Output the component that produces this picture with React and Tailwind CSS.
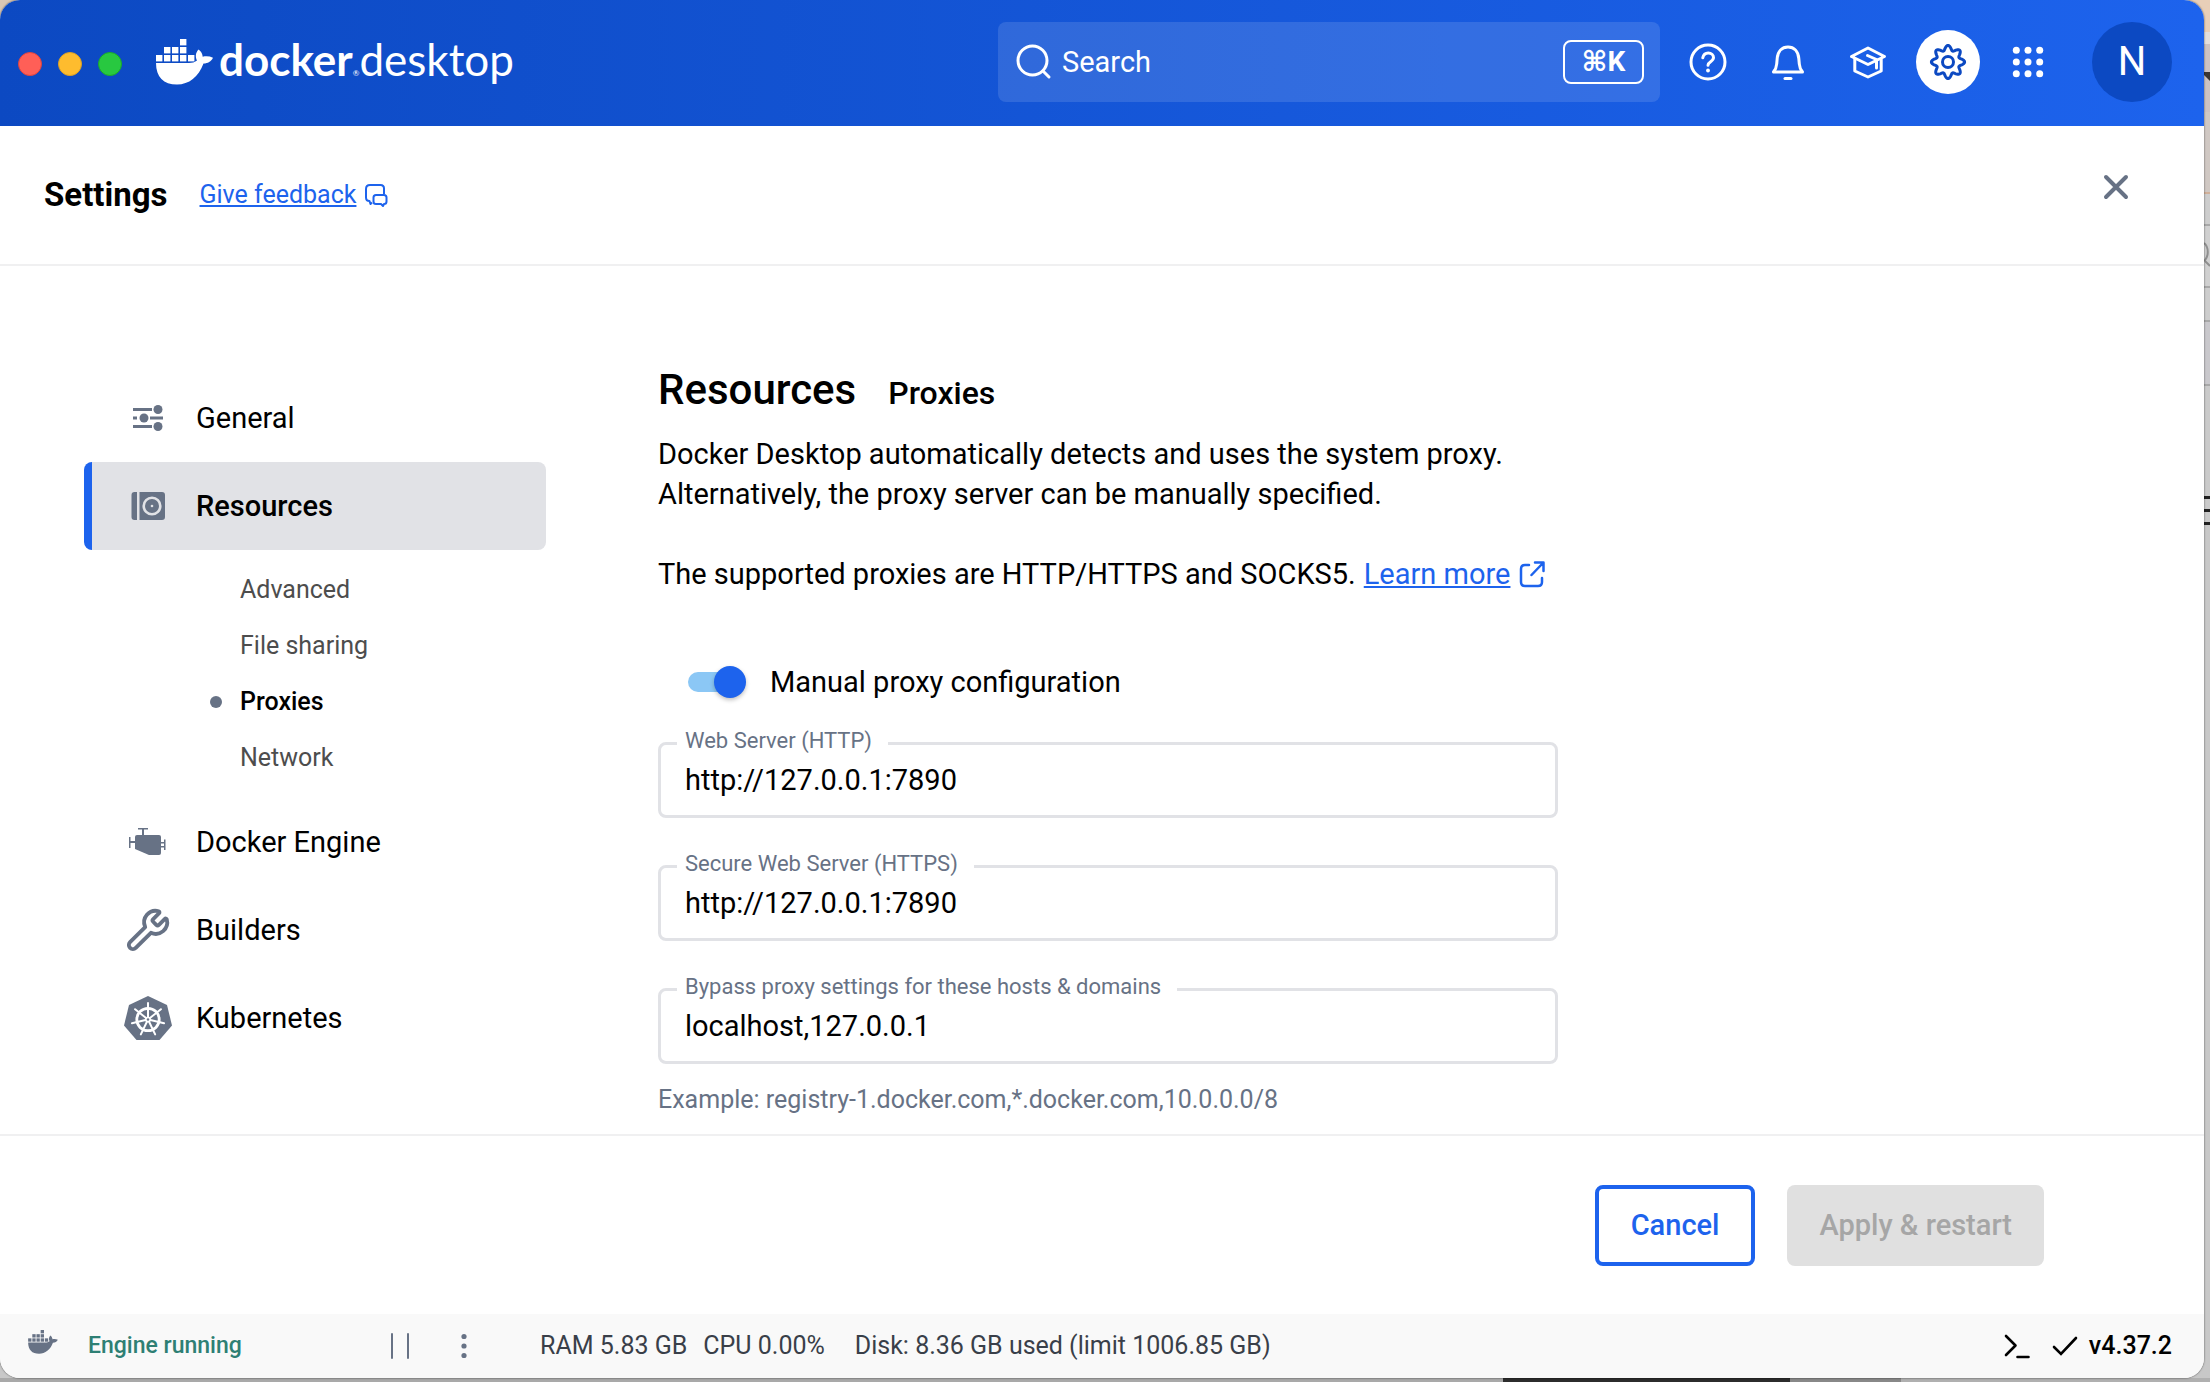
import { useState } from "react";
import { Wrench } from "lucide-react";

function Whale({ className }) {
  const blocks = [
    [24, 0],
    [8, 8], [16, 8], [24, 8],
    [0, 16], [8, 16], [16, 16], [24, 16], [32, 16],
  ];
  return (
    <svg viewBox="0 0 57 46" className={className} fill="currentColor" aria-hidden="true">
      {blocks.map(([x, y]) => (
        <rect key={`${x}-${y}`} x={x} y={y} width="6.4" height="6.4" />
      ))}
      <path d="M0 24h33c3 0 6-.8 8-2.500-1.800-3.500-1.600-7.500 1.500-11 2.700 2 4 4.300 4.200 7.300 3.500-.8 7-.5 10.300 1-2 4-5 5.500-9.500 5.800C42.500 38 33 45.600 21 45.600 7.500 45.600 0 38 0 24Z" />
    </svg>
  );
}

function HelpIcon() {
  return (
    <svg viewBox="0 0 40 40" className="size-10" fill="none" stroke="currentColor" strokeWidth="3" strokeLinecap="round" aria-hidden="true">
      <circle cx="20" cy="20" r="17" />
      <path d="M14.800 15.800c.6-3.200 2.700-4.800 5.500-4.800 3 0 5.200 1.900 5.200 4.600 0 4.200-5.500 3.900-5.500 7.600" />
      <circle cx="20" cy="28.500" r="1.900" fill="currentColor" stroke="none" />
    </svg>
  );
}

function BellIcon() {
  return (
    <svg viewBox="0 0 40 40" className="size-10" fill="none" stroke="currentColor" strokeWidth="3" strokeLinecap="round" strokeLinejoin="round" aria-hidden="true">
      <path d="M5.500 30h29c-2-2.600-3-5-3.200-8l-.5-5.500C30.200 9.200 26 5 20 5S9.800 9.200 9.200 16.500L8.700 22c-.2 3-1.200 5.400-3.200 8Z" />
      <path d="M17 36.500h6" />
    </svg>
  );
}

function LearnIcon() {
  return (
    <svg viewBox="0 0 40 40" className="size-10" fill="none" stroke="currentColor" strokeWidth="3" strokeLinejoin="round" aria-hidden="true">
      <path d="M20 6 3.500 14.500 20 22.500l16.500-8L20 6Z" />
      <path d="M6.800 16.500V29L20 35l13.200-6V16.500" />
      <path d="M19.500 13.500 28.500 17.500V26" strokeLinecap="round" />
    </svg>
  );
}

const gearPath =
  Array.from({ length: 161 }, (_, i) => {
    const a = (i / 160) * Math.PI * 2;
    const r = 14.2 + 2.400 * Math.cos(8 * a);
    return `${i ? "L" : "M"}${(20 + r * Math.cos(a)).toFixed(2)} ${(20 + r * Math.sin(a)).toFixed(2)}`;
  }).join("") + "Z";

function GearIcon() {
  return (
    <svg viewBox="0 0 40 40" className="size-10" fill="none" stroke="currentColor" strokeWidth="3" strokeLinejoin="round" aria-hidden="true">
      <path d={gearPath} />
      <circle cx="20" cy="20" r="5.500" />
    </svg>
  );
}

function AppsIcon() {
  return (
    <svg viewBox="0 0 40 40" className="size-10" fill="currentColor" aria-hidden="true">
      {[8.3, 20, 31.7].map((y) => [8.3, 20, 31.7].map((x) => <circle key={`${x}-${y}`} cx={x} cy={y} r="3.500" />))}
    </svg>
  );
}

function SlidersIcon() {
  return (
    <svg viewBox="0 0 48 48" className="size-12" fill="currentColor" aria-hidden="true">
      <path d="M9 14h19v3H9zM9 22.500h4v3H9zM26 22.500h13v3H26zM9 31h19v3H9z" />
      <circle cx="34" cy="15.500" r="4.500" />
      <circle cx="20" cy="24" r="4.500" />
      <circle cx="34" cy="32.500" r="4.500" />
    </svg>
  );
}

function DiskIcon() {
  return (
    <svg viewBox="0 0 48 48" className="size-12" aria-hidden="true">
      <path fill="currentColor" d="M10.500 10H13v28h-2.500a3 3 0 0 1-3-3V13a3 3 0 0 1 3-3ZM15.500 10H38a3 3 0 0 1 3 3v22a3 3 0 0 1-3 3H15.500z" />
      <circle cx="28" cy="24" r="8.300" fill="none" stroke="#e1e2e6" strokeWidth="2.600" />
      <circle cx="28" cy="24" r="1.300" fill="#e1e2e6" />
    </svg>
  );
}

function EngineIcon() {
  return (
    <svg viewBox="0 0 48 48" className="size-12" fill="currentColor" aria-hidden="true">
      <path d="M13 17h22q2 0 2 2v16q0 2-2 2H25L11 31V19q0-2 2-2Z" />
      <path d="M14 10h10v1.500h-4V17h-2v-5.500h-4zM5 19h1.500v4H11v2H6.500v5H5zM37 24h3v-2.500h1.500V32H40v-2.500h-3V28h3v-2.500h-3z" />
    </svg>
  );
}

function KubernetesIcon() {
  const spokes = [0, 1, 2, 3, 4, 5, 6];
  return (
    <svg viewBox="0 0 48 48" className="size-12" aria-hidden="true">
      <path fill="currentColor" d="M24 2 43 11l5 20.500L35.500 46h-23L0 31.500 5 11Z" />
      <circle cx="24" cy="25.500" r="11.200" fill="none" stroke="#fff" strokeWidth="2.800" />
      {spokes.map((i) => (
        <path key={i} d="M24 23V9" stroke="#fff" strokeWidth="2" strokeLinecap="round" transform={`rotate(${(i * 360) / 7} 24 25.500)`} />
      ))}
      <circle cx="24" cy="25.500" r="3" fill="#fff" />
      <circle cx="24" cy="25.500" r="1.200" fill="currentColor" />
    </svg>
  );
}

const subItems = ["Advanced", "File sharing", "Proxies", "Network"];

function NavItem({ icon, label, active }) {
  return (
    <a
      href="#"
      aria-current={active ? "page" : undefined}
      className={
        active
          ? "flex h-22 items-center gap-6 rounded-lg border-l-8 border-[#1d63ed] bg-[#e1e2e6] pl-8 font-medium"
          : "flex h-22 items-center gap-6 rounded-lg border-l-8 border-transparent pl-8"
      }
    >
      <span className="flex w-12 justify-center text-[#677285]">{icon}</span>
      {label}
    </a>
  );
}

function Field({ id, label, initial }) {
  const [value, setValue] = useState(initial);
  return (
    <div className="relative flex h-19 rounded-lg border-3 border-[#e1e2e6] px-6">
      <label htmlFor={id} className="absolute -top-4 left-4 bg-white pr-4 pl-2 text-[22px] leading-6 text-[#677285]">
        {label}
      </label>
      <input id={id} type="text" value={value} onChange={(e) => setValue(e.target.value)} className="w-full bg-transparent outline-none" />
    </div>
  );
}

function HeaderButton({ label, children, active }) {
  return (
    <button
      type="button"
      aria-label={label}
      className={
        active
          ? "flex size-16 items-center justify-center rounded-full bg-white text-[#0c49c2]"
          : "flex size-16 items-center justify-center rounded-full text-white"
      }
    >
      {children}
    </button>
  );
}

function Backdrop() {
  return (
    <div aria-hidden="true" className="absolute inset-0 overflow-hidden bg-[#c8c8c8]">
      <div className="absolute top-0 left-0 size-6 bg-[#d9c6b4]" />
      <div className="absolute inset-y-0 right-0 flex w-5 flex-col">
        <div className="h-8 bg-[#e8cfb8]" />
        <div className="h-3 bg-[#e4dedb]" />
        <div className="h-17 bg-[#cdc2c2]" />
        <div className="h-20 bg-[#d0c8c3]" />
        <div className="h-[2px] bg-[#d0b09a]" />
        <div className="h-[30px] bg-[#cdcdcd]" />
        <div className="h-[2px] bg-[#a8a8a8]" />
        <div className="h-15 bg-[#d0d0d0]" />
        <div className="h-[2px] bg-[#a8a8a8]" />
        <div className="h-8 bg-[#cdcdcd]" />
        <div className="h-[2px] bg-[#a8a8a8]" />
        <div className="h-[62px] bg-[#c9c8cc]" />
        <div className="h-[2px] bg-[#a8a8a8]" />
        <div className="h-[110px] bg-[#cacaca]" />
        <div className="h-[3px] bg-[#222222]" />
        <div className="h-[10px] bg-[#cacaca]" />
        <div className="h-[3px] bg-[#222222]" />
        <div className="h-[10px] bg-[#cacaca]" />
        <div className="h-[3px] bg-[#222222]" />
        <div className="flex-1 bg-[#c8c8c8]" />
      </div>
      <div className="absolute inset-x-0 bottom-0 flex h-1">
        <div className="w-[68%] bg-[#a9a9a9]" />
        <div className="w-[13%] bg-[#2c2c2c]" />
        <div className="w-[5%] bg-[#888888]" />
        <div className="flex-1 bg-[#b0b0b0]" />
      </div>
      <svg viewBox="0 0 6 100" className="absolute top-0 right-0 h-[100px] w-[6px]">
        <path d="M0 72h6v9L0 75Z" fill="#3b3532" />
      </svg>
      <svg viewBox="0 0 6 40" className="absolute top-[236px] right-0 h-10 w-[6px]" fill="none" stroke="#8f8f8f" strokeWidth="2">
        <path d="M0 7c5 4 5 14 0 18M1 25l5 5" />
      </svg>
    </div>
  );
}

export default function App() {
  const [manual, setManual] = useState(true);
  return (
    <div className="relative flex min-h-screen flex-col pr-[6px] pb-1 font-[Roboto,sans-serif] text-[29px] leading-10 text-black">
      <Backdrop />
      <div className="relative flex flex-1 flex-col overflow-hidden rounded-[20px] bg-white shadow-[0_0_2px_rgba(0,0,0,0.7)]">
        <header className="flex h-[126px] items-center bg-linear-to-r from-[#0c49c2] to-[#1d63ed] pr-8 pb-[2px] pl-[18px] text-white">
          <div className="flex gap-4 pt-1">
            <span className="size-6 rounded-full border border-[#e0443e] bg-[#ff5f57]" />
            <span className="size-6 rounded-full border border-[#dea123] bg-[#febc2e]" />
            <span className="size-6 rounded-full border border-[#1aab29] bg-[#28c840]" />
          </div>
          <div className="ml-[34px] flex items-center">
            <Whale className="h-[46px] w-[57px]" />
            <div className="ml-[6px] flex items-baseline pt-2 font-[Lato,sans-serif] text-[44px] leading-[60px]">
              <span className="font-bold">docker</span>
              <span className="text-[8px]">®</span>
              <span>desktop</span>
            </div>
          </div>
          <label className="ml-auto flex h-20 w-[662px] items-center rounded-lg bg-white/12 pr-4 pl-4">
            <svg viewBox="0 0 40 40" className="size-10 shrink-0" fill="none" stroke="currentColor" strokeWidth="3" strokeLinecap="round" aria-hidden="true">
              <circle cx="18.500" cy="18.500" r="14.500" />
              <path d="m29 29 6 6" />
            </svg>
            <input type="search" aria-label="Search" placeholder="Search" className="ml-2 min-w-0 flex-1 bg-transparent outline-none placeholder:text-white" />
            <kbd className="flex h-11 w-[81px] items-center justify-center rounded-lg border-2 border-white font-[Roboto,'DejaVu_Sans',sans-serif] text-[28px] font-bold">⌘K</kbd>
          </label>
          <nav aria-label="Toolbar" className="ml-4 flex items-center gap-4">
            <HeaderButton label="Help"><HelpIcon /></HeaderButton>
            <HeaderButton label="Notifications"><BellIcon /></HeaderButton>
            <HeaderButton label="Learning center"><LearnIcon /></HeaderButton>
            <HeaderButton label="Settings" active><GearIcon /></HeaderButton>
            <HeaderButton label="Apps"><AppsIcon /></HeaderButton>
          </nav>
          <button type="button" aria-label="Account" className="ml-8 size-20 rounded-full bg-[#0c49c2] text-[40px]">N</button>
        </header>

        <div className="flex h-[140px] items-center border-b-2 border-[#f0f0f1] pr-[68px] pl-11">
          <h1 className="text-[33px] font-bold">Settings</h1>
          <a href="#" className="ml-8 flex items-center gap-2 text-[25px] text-[#1d63ed]">
            <span className="underline decoration-2 underline-offset-2">Give feedback</span>
            <svg viewBox="0 0 24 24" className="size-6" fill="none" stroke="currentColor" strokeWidth="2" strokeLinejoin="round" aria-hidden="true">
              <path d="M8 19.500 6.500 21 5.500 18C3 18 2 17 2 14.500V6c0-2.500 1.500-4 4-4h10.500C19 2 20 3.500 20 5.500V11" />
              <path d="M12 12h8c1.500 0 2.500 1 2.500 2.500v4c0 1.500-1 2.500-2.500 2.500l-1 2-2-2h-5c-1.500 0-2.500-1-2.500-2.500v-4C9.500 13 10.500 12 12 12Z" />
            </svg>
          </a>
          <button type="button" aria-label="Close" className="mb-4 ml-auto flex size-10 items-center justify-center text-[#677285]">
            <svg viewBox="0 0 40 40" className="size-10" fill="none" stroke="currentColor" strokeWidth="4" strokeLinecap="round" aria-hidden="true">
              <path d="m10 10 20 20M30 10 10 30" />
            </svg>
          </button>
        </div>

        <main className="flex flex-1 items-start pl-21">
          <nav aria-label="Settings sections" className="mt-27 w-[462px] shrink-0">
            <NavItem icon={<SlidersIcon />} label="General" />
            <NavItem icon={<DiskIcon />} label="Resources" active />
            <ul className="my-3 pl-30 text-[25px] text-[#4d4d4d]">
              {subItems.map((item) => (
                <li key={item} className="flex h-14 items-center">
                  <span className={item === "Proxies" ? "mr-[18px] ml-[6px] size-3 rounded-full bg-[#677285]" : "mr-[18px] ml-[6px] size-3"} />
                  <a href="#" className={item === "Proxies" ? "font-medium text-black" : ""}>{item}</a>
                </li>
              ))}
            </ul>
            <NavItem icon={<EngineIcon />} label="Docker Engine" />
            <NavItem icon={<Wrench size={46} strokeWidth={2} className="shrink-0" />} label="Builders" />
            <NavItem icon={<KubernetesIcon />} label="Kubernetes" />
          </nav>

          <section className="mt-24 ml-28 w-[900px]">
            <div className="flex items-baseline gap-8 font-medium">
              <h2 className="text-[42px] leading-14">Resources</h2>
              <h3 className="text-[32px]">Proxies</h3>
            </div>
            <p className="mt-4">
              Docker Desktop automatically detects and uses the system proxy.
              <br />
              Alternatively, the proxy server can be manually specified.
            </p>
            <p className="mt-10 flex items-center gap-2">
              The supported proxies are HTTP/HTTPS and SOCKS5.
              <a href="#" className="flex items-center gap-2 text-[#1d63ed]">
                <span className="underline decoration-2 underline-offset-2">Learn more</span>
                <svg viewBox="0 0 28 28" className="size-7" fill="none" stroke="currentColor" strokeWidth="2.500" strokeLinecap="round" strokeLinejoin="round" aria-hidden="true">
                  <path d="M11 5H7C4.500 5 3 6.500 3 9v13c0 2.500 1.500 4 4 4h13c2.500 0 4-1.500 4-4v-4M17 2.500h8.500V11M25 3 13.500 15" />
                </svg>
              </a>
            </p>
            <label className="mt-16 ml-[30px] flex h-12 items-center">
              <span className="relative flex h-8 w-[58px] items-center">
                <input type="checkbox" role="switch" checked={manual} onChange={(e) => setManual(e.target.checked)} className="peer sr-only" />
                <span className="h-5 w-13 rounded-full bg-[#c4c8d1] peer-checked:bg-[#8bc7f5]" />
                <span className="absolute left-0 size-8 rounded-full bg-[#677285] shadow-[0_2px_4px_rgba(0,0,0,0.25)] peer-checked:left-[26px] peer-checked:bg-[#1d63ed]" />
              </span>
              <span className="ml-6">Manual proxy configuration</span>
            </label>
            <div className="mt-9 flex flex-col gap-[47px]">
              <Field id="http" label="Web Server (HTTP)" initial="http://127.0.0.1:7890" />
              <Field id="https" label="Secure Web Server (HTTPS)" initial="http://127.0.0.1:7890" />
              <Field id="bypass" label="Bypass proxy settings for these hosts & domains" initial="localhost,127.0.0.1" />
            </div>
            <p className="mt-4 text-[25px] text-[#677285]">Example: registry-1.docker.com,*.docker.com,10.0.0.0/8</p>
          </section>
        </main>

        <div className="flex h-[180px] items-center justify-end gap-8 border-t-2 border-[#f0f0f1] pr-40 font-medium">
          <button type="button" className="h-[81px] rounded-lg border-4 border-[#1d63ed] px-8 text-[#1d63ed]">Cancel</button>
          <button type="button" disabled className="h-[81px] rounded-lg bg-[#e0e0e0] px-8 text-[#a6a6a6]">Apply &amp; restart</button>
        </div>

        <footer className="flex h-16 items-center bg-[#f9f9f9] pr-8 pl-7 text-[25px] text-[#393f49]">
          <Whale className="mb-2 h-6 w-[30px] text-[#677285]" />
          <span className="ml-[30px] w-[300px] text-[23px] font-medium text-[#2e7f74]">Engine running</span>
          <button type="button" aria-label="Pause engine" className="text-[#677285]">
            <svg viewBox="0 0 24 28" className="h-7 w-6" fill="none" stroke="currentColor" strokeWidth="2" strokeLinecap="round" aria-hidden="true">
              <path d="M4 2v24M20 2v24" />
            </svg>
          </button>
          <button type="button" aria-label="Engine menu" className="ml-10 text-[#677285]">
            <svg viewBox="0 0 24 28" className="h-7 w-6" fill="currentColor" aria-hidden="true">
              <circle cx="12" cy="4.500" r="2.600" />
              <circle cx="12" cy="14" r="2.600" />
              <circle cx="12" cy="23.500" r="2.600" />
            </svg>
          </button>
          <span className="ml-16">RAM 5.83 GB</span>
          <span className="ml-4">CPU 0.00%</span>
          <span className="ml-[30px]">Disk: 8.36 GB used (limit 1006.85 GB)</span>
          <div className="ml-auto flex items-center text-black">
            <button type="button" aria-label="Open terminal">
              <svg viewBox="0 0 28 28" className="size-7" fill="none" stroke="currentColor" strokeWidth="2.600" strokeLinecap="round" strokeLinejoin="round" aria-hidden="true">
                <path d="m3 4 9.500 9.500L3 23M14.500 25h11" />
              </svg>
            </button>
            <svg viewBox="0 0 28 28" className="ml-5 size-7" fill="none" stroke="currentColor" strokeWidth="2.600" strokeLinecap="round" aria-hidden="true">
              <path d="m3 15 7 7L25 6" />
            </svg>
            <span className="ml-[10px] font-medium">v4.37.2</span>
          </div>
        </footer>
      </div>
    </div>
  );
}
